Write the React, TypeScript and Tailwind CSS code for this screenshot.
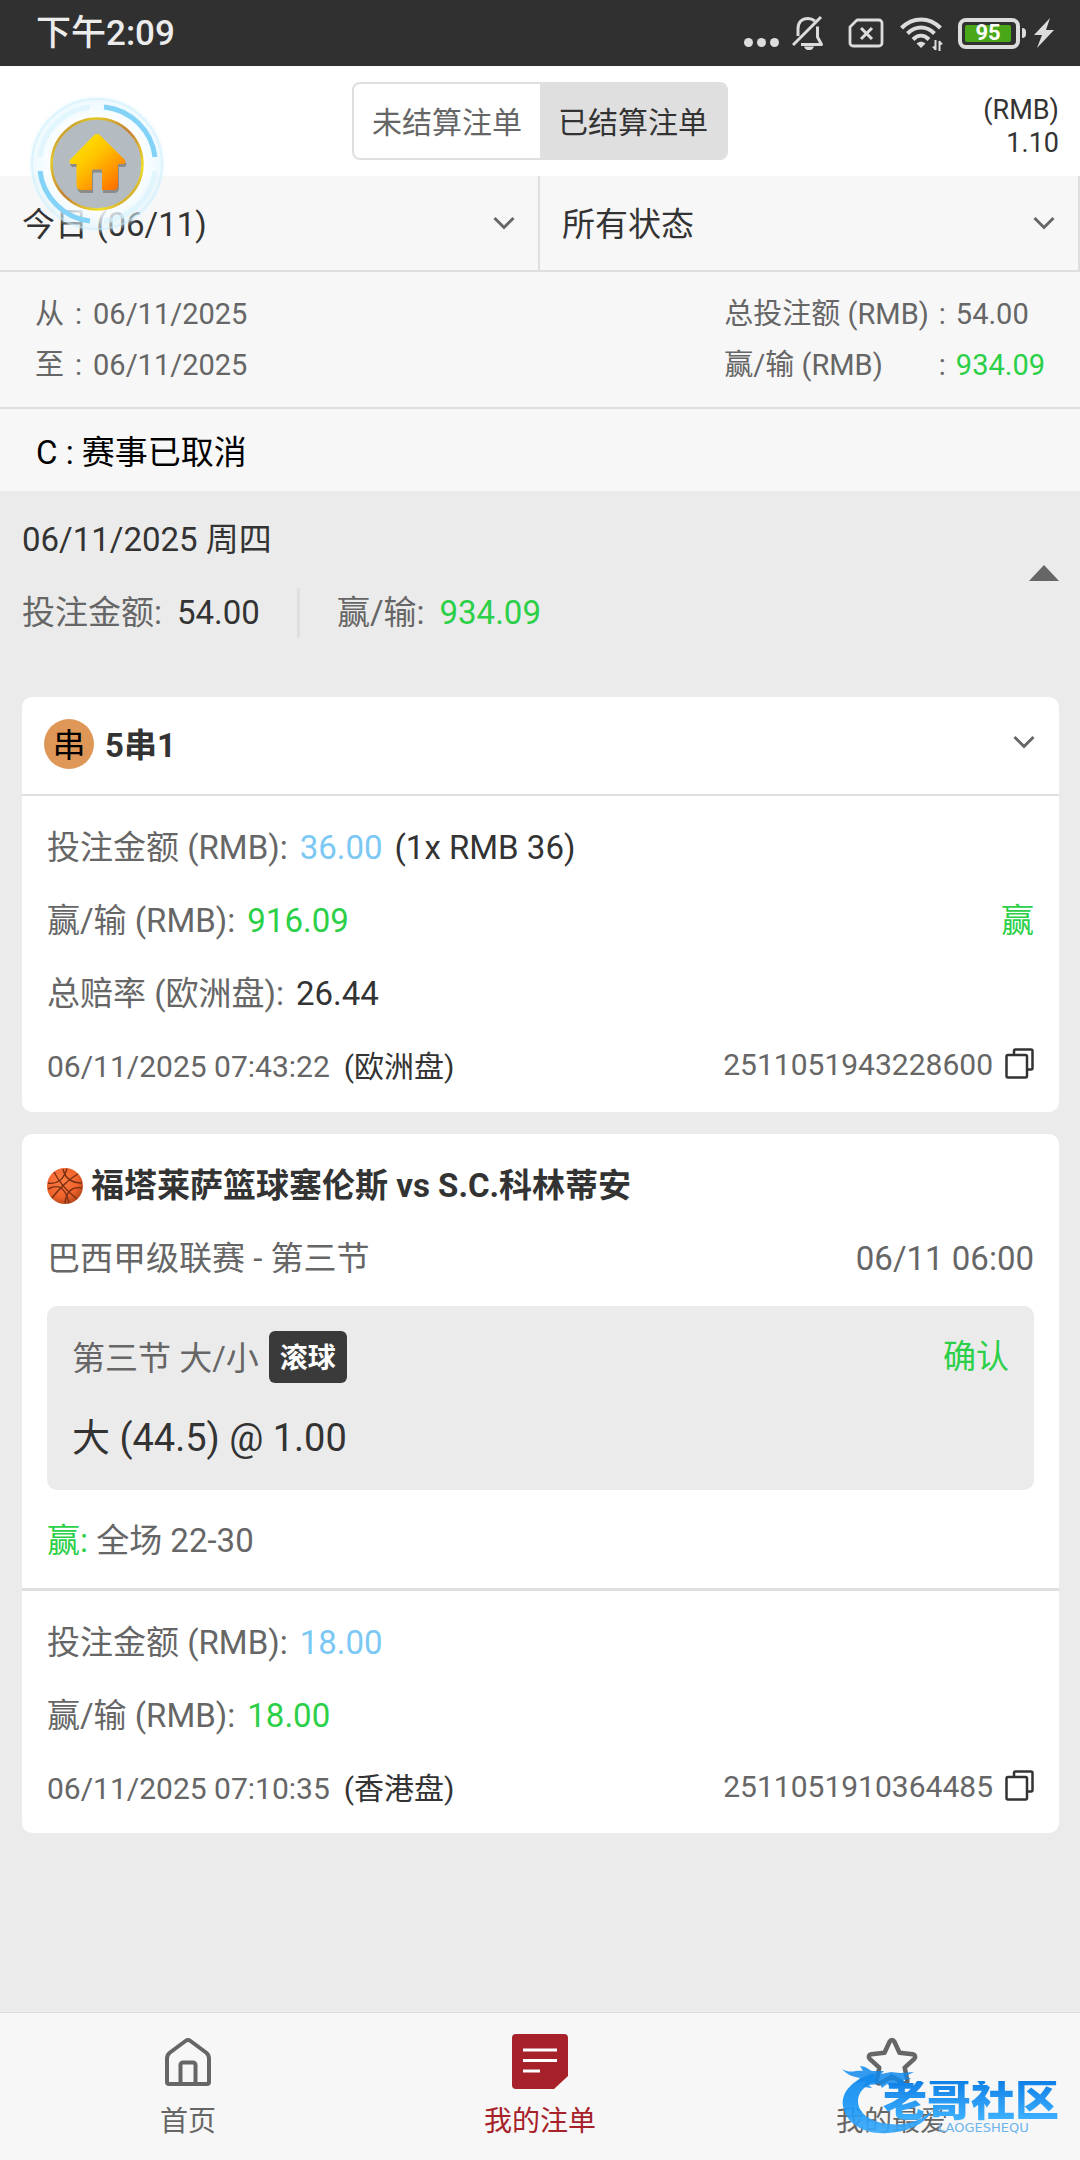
import React from 'react';

function StatusIcons() {
  return (
    <div className="flex h-full items-center text-[#dcdcdc]">
      <svg className="h-9 w-9" viewBox="0 0 36 36" fill="currentColor" aria-hidden="true">
        <circle cx="4.500" cy="27.500" r="4.500" />
        <circle cx="17.500" cy="27.500" r="4.500" />
        <circle cx="30.500" cy="27.500" r="4.500" />
      </svg>
      <svg className="ml-3 h-9 w-8" viewBox="0 0 32 36" fill="none" stroke="currentColor" strokeWidth="3" aria-hidden="true">
        <path d="M1 30 29 2" />
        <path d="M6 21V14C6 7 10 3.500 16 3.500c3 0 5 1 7 2.500M25.500 11.500V22l4 7.500H9" strokeLinejoin="round" />
        <path d="M12 31.500h10c-1 3-3 3.500-5 3.500s-4-.5-5-3.500z" fill="currentColor" stroke="none" />
      </svg>
      <svg className="ml-6 h-9 w-9" viewBox="0 0 36 36" fill="none" stroke="currentColor" strokeWidth="2.800" strokeLinejoin="round" aria-hidden="true">
        <path d="M9 5h22a3 3 0 0 1 3 3v20a3 3 0 0 1-3 3H5a3 3 0 0 1-3-3V12z" />
        <path d="m13 13 11 11M24 13 13 24" strokeWidth="3" />
      </svg>
      <svg className="ml-4 h-9 w-[43px]" viewBox="0 0 43 36" fill="none" stroke="currentColor" strokeWidth="4" aria-hidden="true">
        <path d="M1.500 13c11-11.500 28-11.500 39 0" />
        <path d="M7.500 18.500c8-8 19-8 27 0" />
        <path d="M13 24.500c5-5 11-5 16 0" />
        <path d="M16.500 28.500c3-2.500 6-2.500 9 0L21 33z" fill="currentColor" stroke="none" />
        <path d="M35.500 25v10M39.500 36V26" strokeWidth="2" />
        <path d="m32 32 3.500 3.500v-5zM43 29l-3.500-3.500v5z" fill="currentColor" stroke="none" />
      </svg>
      <div className="ml-[15px] flex items-center">
        <div className="flex h-[31px] w-[62px] rounded-lg border-[4px] border-[#dcdcdc] p-[3px]">
          <span className="flex w-[46px] items-center justify-center rounded-xs bg-[#4aa818] text-[22px] leading-none font-bold text-white">95</span>
        </div>
        <div className="ml-0.5 h-[10px] w-1 rounded-r-sm bg-[#dcdcdc]" />
      </div>
      <svg className="ml-2 h-8 w-5" viewBox="0 0 20 32" fill="currentColor" aria-hidden="true">
        <path d="M16 1 0 18h8L3 31 20 13h-8z" />
      </svg>
    </div>
  );
}

function HomeBadge() {
  return (
    <button type="button" aria-label="主页" className="absolute top-[27px] left-[26px] z-10 h-[142px] w-[142px]">
      <svg viewBox="0 0 142 142" className="h-full w-full" fill="none">
        <defs>
          <linearGradient id="hb-house" x1="45" y1="40" x2="95" y2="95" gradientUnits="userSpaceOnUse">
            <stop offset="0" stopColor="#ffee00" />
            <stop offset=".45" stopColor="#ffc400" />
            <stop offset="1" stopColor="#ff6a00" />
          </linearGradient>
          <linearGradient id="hb-rim" x1="30" y1="30" x2="112" y2="112" gradientUnits="userSpaceOnUse">
            <stop offset="0" stopColor="#b87a34" />
            <stop offset=".2" stopColor="#e2c92a" />
            <stop offset=".5" stopColor="#c47f35" />
            <stop offset=".8" stopColor="#f0e22a" />
            <stop offset="1" stopColor="#b87a34" />
          </linearGradient>
          <radialGradient id="hb-halo">
            <stop offset=".64" stopColor="#ffffff" stopOpacity=".95" />
            <stop offset=".82" stopColor="#eefaff" stopOpacity=".7" />
            <stop offset=".93" stopColor="#dcf4fd" stopOpacity=".5" />
            <stop offset="1" stopColor="#eefaff" stopOpacity="0" />
          </radialGradient>
        </defs>
        <circle cx="71" cy="71" r="70" fill="url(#hb-halo)" />
        <circle cx="71" cy="71" r="65" stroke="#c9edfb" strokeOpacity=".5" strokeWidth="2" />
        <path d="M78 14a57 57 0 0 1 51 50M14 78a57 57 0 0 0 50 50" stroke="#82d3f7" strokeWidth="5" />
        <path d="M64 14a57 57 0 0 0-50 50M129 78a57 57 0 0 1-51 50" stroke="#d6f1fc" strokeOpacity=".6" strokeWidth="5" />
        <circle cx="71" cy="71" r="45.500" fill="#b4bbc1" stroke="url(#hb-rim)" strokeWidth="2.500" />
        <path
          d="M71 41c-1 0-2 .4-3 1.300L44.500 66.500c-1.800 2-1.200 4.500 1.500 4.500h4.500v21c0 3 2 5 5 5H66V78c0-1 .6-1.600 1.600-1.600h6.800c1 0 1.600.6 1.600 1.600v19h11c3 0 5-2 5-5V71h5c2.500 0 3.200-2.500 1.500-4.500L74 42.300c-1-.9-2-1.300-3-1.300z"
          fill="#6f6a60"
          opacity=".6"
          transform="translate(1 3)"
        />
        <path
          d="M71 41c-1 0-2 .4-3 1.300L44.500 66.500c-1.800 2-1.200 4.500 1.500 4.500h4.500v21c0 3 2 5 5 5H66V78c0-1 .6-1.600 1.600-1.600h6.800c1 0 1.600.6 1.600 1.600v19h11c3 0 5-2 5-5V71h5c2.500 0 3.200-2.500 1.500-4.500L74 42.300c-1-.9-2-1.300-3-1.300z"
          fill="url(#hb-house)"
        />
      </svg>
    </button>
  );
}

function Chevron({ className }: { className: string }) {
  return (
    <svg className={className} viewBox="0 0 22 14" fill="none" stroke="#666" strokeWidth="3" aria-hidden="true">
      <path d="m1.500 2 9.500 9.500L20.500 2" />
    </svg>
  );
}

function Filter({ label, value }: { label: string; value: string }) {
  return (
    <div className="relative flex-1 border-r-2 border-[#dfdfdf]">
      <select aria-label={label} className="h-full w-full appearance-none bg-transparent pt-1 pl-[22px] text-[33px] text-[#333] outline-none">
        <option>{value}</option>
      </select>
      <Chevron className="pointer-events-none absolute top-[40px] right-[23px] h-[14px] w-[22px]" />
    </div>
  );
}

function CopyId({ id }: { id: string }) {
  return (
    <div className="flex items-center gap-3 pb-1 text-[30px] leading-9 text-[#666]">
      <span>{id}</span>
      <button type="button" aria-label="复制" className="pb-1">
        <svg className="h-[31px] w-[29px]" viewBox="0 0 29 31" fill="none" stroke="#333" strokeWidth="2.500" strokeLinejoin="round" aria-hidden="true">
          <rect x="1.500" y="7" width="20.500" height="22.500" rx="1.500" />
          <path d="M9 6.500V3a1.500 1.500 0 0 1 1.500-1.500H26A1.500 1.500 0 0 1 27.500 3v17a1.500 1.500 0 0 1-1.500 1.500h-3.500" />
        </svg>
      </button>
    </div>
  );
}

function Row({ label, value, tone, children }: { label: string; value: string; tone: string; children?: React.ReactNode }) {
  return (
    <div className="flex items-center">
      <span className="text-[#666]">{label}</span>
      <span className={'ml-3 ' + tone}>{value}</span>
      {children}
    </div>
  );
}

function Footer({ time, market, id }: { time: string; market: string; id: string }) {
  return (
    <div className="flex items-center justify-between">
      <div className="flex gap-[14px] text-[30px]">
        <span className="text-[#666]">{time}</span>
        <span>{market}</span>
      </div>
      <CopyId id={id} />
    </div>
  );
}

function Basketball() {
  return (
    <svg className="h-9 w-9" viewBox="0 0 36 36" fill="none" aria-hidden="true">
      <defs>
        <radialGradient id="ball" cx=".4" cy=".35" r=".7">
          <stop offset="0" stopColor="#ff7d42" />
          <stop offset=".65" stopColor="#f0622c" />
          <stop offset="1" stopColor="#b04417" />
        </radialGradient>
      </defs>
      <circle cx="18" cy="18" r="18" fill="url(#ball)" />
      <g stroke="#7a3013" strokeWidth="1.400">
        <path d="M7 4c5 10 14 20 23 27" />
        <path d="M31 6C22 11 11 22 5 30" />
        <path d="M1 15c9 2 16-4 19-14.500" />
        <path d="M1 21c10-5 17-3 21 14" />
        <path d="M16 1c2 9 9 14 19 14" />
        <path d="M35 20c-10-2-16 4-17 15" />
      </g>
    </svg>
  );
}

function Watermark() {
  return (
    <div className="pointer-events-none absolute top-[52px] right-[14px] h-[72px] w-[226px]" aria-hidden="true">
      <svg className="absolute inset-0 h-full w-full" viewBox="0 0 226 72" fill="none">
        <defs>
          <linearGradient id="dragon" x1="0" y1="0" x2="0" y2="72" gradientUnits="userSpaceOnUse">
            <stop offset="0" stopColor="#0b86ec" />
            <stop offset=".5" stopColor="#1593f5" />
            <stop offset="1" stopColor="#3fadfb" />
          </linearGradient>
        </defs>
        <path
          d="M34 8C12 15 1 27 3 41c3 18 22 29 45 27 20-1 37-9 44-22-10 9-26 15-43 13-19-2-31-11-31-23 0-9 7-16 18-20z"
          fill="url(#dragon)"
          fillOpacity=".92"
        />
        <path
          d="M2 4c8 5 14 1 21 2l-3-5c5 0 8 3 12 5h12l-3 3 10-2 9 1 14-1-8 4 5 3-8 1 3 4-9 0-3 5-7-5-5 4-2-4-11 1 3 3-9-1 4-6-12 2 5-5c-6-1-13-3-18-9z"
          fill="#1289ec"
          fillOpacity=".85"
        />
      </svg>
      <span className="absolute top-[16px] left-[43px] bg-gradient-to-b from-[#0f80e6] to-[#3fb2ff] bg-clip-text text-[44px] leading-[40px] font-black whitespace-nowrap text-transparent">老哥社区</span>
      <span className="absolute top-[57px] left-[98px] font-['DejaVu_Sans',sans-serif] text-[13px] leading-[12px] whitespace-nowrap text-[#6cb4ee]">LAOGESHEQU</span>
    </div>
  );
}

export default function App() {
  return (
    <div className="flex min-h-screen flex-col bg-[#ebebeb] font-[Roboto,'Noto_Sans_CJK_SC',sans-serif] text-[33px] leading-[40px] text-[#333]">
      <div className="flex h-[66px] items-center justify-between bg-[#303030] pr-[26px] pl-9 font-medium text-[#ececec]">
        <span className="pt-0.5 text-[35px]">下午2:09</span>
        <StatusIcons />
      </div>

      <header className="relative grid grid-cols-[1fr_auto_1fr] items-center bg-white py-4">
        <HomeBadge />
        <span />
        <div className="flex h-[78px] overflow-hidden rounded-lg border-2 border-[#dfdfdf] text-[30px]">
          <button type="button" className="px-[18px] pt-1 text-[#666]">未结算注单</button>
          <button type="button" className="bg-[#dfdfdf] px-[18px] pt-1">已结算注单</button>
        </div>
        <div className="pt-3 pr-[21px] text-right text-[27px] leading-[33px]">
          <p>(RMB)</p>
          <p>1.10</p>
        </div>
      </header>

      <div className="flex h-24 border-b-2 border-[#dfdfdf] bg-[#f7f7f7]">
        <Filter label="日期" value="今日 (06/11)" />
        <Filter label="状态" value="所有状态" />
      </div>

      <section className="flex justify-between border-b-2 border-[#dfdfdf] bg-[#f7f7f7] px-[35px] pt-[22px] pb-[22px] text-[29px] text-[#666]">
        <div className="grid grid-cols-[auto_auto_auto] gap-x-[11px] gap-y-[11px]">
          <span>从</span><span>:</span><span>06/11/2025</span>
          <span>至</span><span>:</span><span>06/11/2025</span>
        </div>
        <div className="grid grid-cols-[auto_auto_auto] gap-x-[10px] gap-y-[11px]">
          <span>总投注额 (RMB)</span><span>:</span><span>54.00</span>
          <span>赢/输 (RMB)</span><span>:</span><span className="text-[#2bd048]">934.09</span>
        </div>
      </section>

      <p className="bg-[#f7f7f7] px-9 pt-6 pb-[18px] text-black">C : 赛事已取消</p>

      <button type="button" className="flex items-center justify-between pr-[21px] pl-[22px] pt-[29px] pb-[59px] text-left">
        <span className="flex flex-col gap-7">
          <span>06/11/2025 周四</span>
          <span className="flex items-center leading-[50px]">
            <span className="text-[#666]">投注金额:</span>
            <span className="ml-[15px]">54.00</span>
            <span className="mx-[37px] h-[50px] w-[3px] bg-[#e0e0e0]" />
            <span className="text-[#666]">赢/输:</span>
            <span className="ml-[15px] text-[#2bd048]">934.09</span>
          </span>
        </span>
        <svg className="mb-3 h-4 w-[30px]" viewBox="0 0 30 16" fill="#666" aria-hidden="true">
          <path d="M15 0 30 16H0z" />
        </svg>
      </button>

      <main className="flex flex-1 flex-col gap-[22px] pr-[21px] pb-10 pl-[22px]">
        <article className="rounded-[10px] bg-white">
          <button type="button" className="flex h-[99px] w-full items-center justify-between border-b-2 border-[#dfdfdf] pr-[24px] pl-[22px]">
            <span className="flex items-center gap-[11px]">
              <span className="mb-1 flex h-[50px] w-[50px] items-center justify-center rounded-full bg-[#de9757] pt-1 text-black">串</span>
              <span className="font-bold">5串1</span>
            </span>
            <Chevron className="mb-2 h-[14px] w-[22px]" />
          </button>
          <div className="flex flex-col gap-[33px] px-[25px] pt-8 pb-[25px]">
            <Row label="投注金额 (RMB):" value="36.00" tone="text-[#7cc8f5]">
              <span className="ml-3">(1x RMB 36)</span>
            </Row>
            <Row label="赢/输 (RMB):" value="916.09" tone="text-[#2bd048]">
              <span className="ml-auto text-[#2bd048]">赢</span>
            </Row>
            <Row label="总赔率 (欧洲盘):" value="26.44" tone="text-[#333]" />
            <Footer time="06/11/2025 07:43:22" market="(欧洲盘)" id="2511051943228600" />
          </div>
        </article>

        <article className="rounded-[10px] bg-white">
          <div className="border-b-[3px] border-[#dfdfdf] px-[25px] pt-8 pb-[27px]">
            <h2 className="flex items-center gap-2 font-bold">
              <Basketball />
              福塔莱萨篮球塞伦斯 vs S.C.科林蒂安
            </h2>
            <div className="mt-[33px] flex items-center justify-between text-[#666]">
              <span>巴西甲级联赛 - 第三节</span>
              <time>06/11 06:00</time>
            </div>
            <div className="mt-[27px] rounded-[10px] bg-[#ebebeb] px-[25px] pt-[25px] pb-6">
              <div className="flex items-center">
                <span className="pt-1 text-[#666]">第三节 大/小</span>
                <span className="ml-[10px] flex h-[52px] items-center rounded-md bg-[#3a3a3a] px-[11px] pt-1 text-[28px] font-bold text-white">滚球</span>
                <span className="ml-auto text-[#2bd048]">确认</span>
              </div>
              <p className="mt-7 text-[38px] leading-[55px]">大 (44.5) @ 1.00</p>
            </div>
            <p className="mt-[31px] text-[#666]">
              <span className="text-[#2bd048]">赢:</span> 全场 22-30
            </p>
          </div>
          <div className="flex flex-col gap-[33px] px-[25px] pt-8 pb-6">
            <Row label="投注金额 (RMB):" value="18.00" tone="text-[#7cc8f5]" />
            <Row label="赢/输 (RMB):" value="18.00" tone="text-[#2bd048]" />
            <Footer time="06/11/2025 07:10:35" market="(香港盘)" id="2511051910364485" />
          </div>
        </article>
      </main>

      <nav className="relative grid h-[148px] grid-cols-3 overflow-hidden border-t border-[#dcdcdc] bg-[#f7f7f7] px-3 pt-[21px] text-[28px] leading-9 text-[#666]">
        <a href="#home" className="flex flex-col items-center gap-[14px]">
          <svg className="h-14 w-14" viewBox="0 0 56 56" fill="none" stroke="currentColor" strokeWidth="4" strokeLinejoin="round" aria-hidden="true">
            <path d="M25.500 7 10 18.500c-2 1.500-3 3.500-3 6V48a2 2 0 0 0 2 2h38a2 2 0 0 0 2-2V24.500c0-2.500-1-4.500-3-6L30.500 7c-1.600-1.200-3.400-1.200-5 0z" />
            <path d="M20.500 49V31a2.500 2.500 0 0 1 2.500-2.500h10a2.500 2.500 0 0 1 2.500 2.500v18" />
          </svg>
          首页
        </a>
        <a href="#bets" className="flex flex-col items-center gap-[14px] text-[#a62129]">
          <svg className="h-14 w-14" viewBox="0 0 56 56" aria-hidden="true">
            <path d="M4 0h48a4 4 0 0 1 4 4v38L42 55H4a4 4 0 0 1-4-4V4a4 4 0 0 1 4-4z" fill="currentColor" />
            <path d="M11 16h34M11 26.500h34M11 37h17" stroke="#fff" strokeWidth="3.200" />
          </svg>
          我的注单
        </a>
        <a href="#favourites" className="flex flex-col items-center gap-[14px]">
          <svg className="h-14 w-14" viewBox="0 0 56 56" fill="none" stroke="currentColor" strokeWidth="4.500" strokeLinejoin="round" aria-hidden="true">
            <path d="M25.700 7.500c1-2 3.600-2 4.600 0l5.200 11.200 13.300 1.600c2.400.3 3.200 3 1.500 4.600l-9.600 8.700 2.600 12.800c.5 2.200-1.800 3.900-3.700 2.700L28 42.500l-11.600 6.600c-1.900 1.200-4.200-.5-3.700-2.700l2.600-12.800-9.600-8.700c-1.700-1.600-.9-4.300 1.500-4.600l13.300-1.600z" />
          </svg>
          我的最爱
        </a>
        <Watermark />
      </nav>
    </div>
  );
}
